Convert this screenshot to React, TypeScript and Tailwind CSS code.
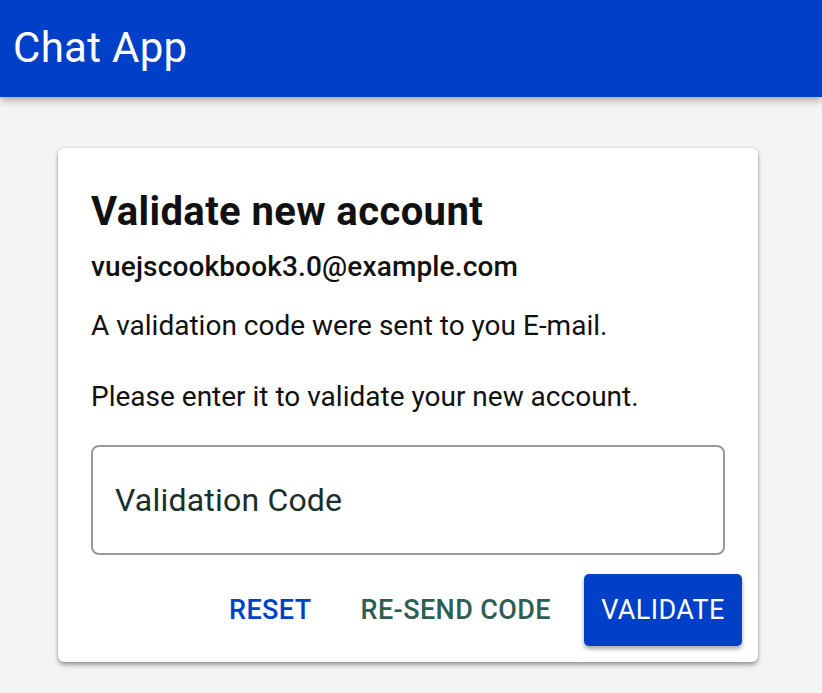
import React from "react";

export default function App() {
  return (
    <div className="min-h-[693px] w-full bg-[#f4f4f4]" style={{ fontFamily: "Roboto, 'Liberation Sans', sans-serif" }}>
      <header className="h-[97px] bg-[#0040c8] flex items-center px-[13px] shadow-[0_3px_8px_rgba(0,0,0,0.35)] relative z-10">
        <h1 className="text-white text-[42px] font-normal leading-none tracking-[0.3px] -mt-[2px]">Chat App</h1>
      </header>
      <main className="px-[58px] pt-[51px]">
        <div className="w-[700px] bg-white rounded-[6px] shadow-[0_3px_4px_rgba(0,0,0,0.35),0_0_3px_rgba(0,0,0,0.15)] pl-[33px] pr-[16px] pt-[42px] pb-[16px]">
          <h2 className="text-[40px] font-bold text-[#111] leading-[44px] tracking-[0.4px]">Validate new account</h2>
          <p className="mt-[17px] text-[28px] font-medium text-[#111] leading-[32px] tracking-[0.15px]">vuejscookbook3.0@example.com</p>
          <p className="mt-[23px] text-[28px] text-[#111] leading-[40px]">A validation code were sent to you E-mail.</p>
          <p className="mt-[31px] text-[28px] text-[#111] leading-[40px]">Please enter it to validate your new account.</p>
          <div className="mt-[28px] mr-[17px] h-[110px] border-2 border-[#999] rounded-[8px] flex items-center px-[22px]">
            <span className="text-[32px] text-[#1a2e2a] tracking-[0.2px]">Validation Code</span>
          </div>
          <div className="mt-[19px] flex items-center justify-end">
            <button className="text-[27px] font-medium text-[#0040c8] px-[16px] h-[72px] tracking-[0.4px]">RESET</button>
            <button className="ml-[17px] text-[27px] font-medium text-[#2d5e52] px-[16px] h-[72px] tracking-[0.4px]">RE-SEND CODE</button>
            <button className="ml-[17px] w-[158px] h-[72px] bg-[#0040c8] rounded-[5px] text-white text-[27px] font-normal tracking-[0.4px] shadow-[0_3px_4px_rgba(0,0,0,0.35)]">VALIDATE</button>
          </div>
        </div>
      </main>
    </div>
  );
}
